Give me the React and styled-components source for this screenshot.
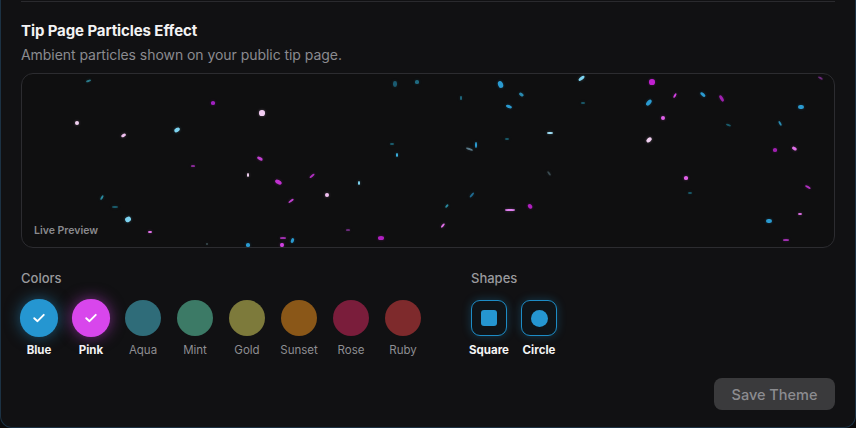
import React from "react";
import styled, { createGlobalStyle } from "styled-components";

const Global = createGlobalStyle`
  html, body { margin: 0; padding: 0; background: #0a0a0b; }
  body { font-family: Inter, "Noto Sans", sans-serif; -webkit-font-smoothing: antialiased; }
  * { box-sizing: border-box; }
`;

const Card = styled.div`
  width: 856px;
  height: 428px;
  background: #111113;
  border: 1px solid #1c3244;
  border-top: none;
  border-radius: 0 0 12px 12px;
  padding: 0 20px 17px;
  display: flex;
  flex-direction: column;
  overflow: hidden;
`;

const Divider = styled.div`
  height: 1px;
  margin-top: 1px;
  background: #2a2a2e;
`;

const Title = styled.h2`
  margin: 19px 0 0;
  font-size: 15px;
  line-height: 20px;
  font-weight: 700;
  color: #f3f3f4;
  letter-spacing: -0.1px;
`;

const Subtitle = styled.p`
  margin: 4px 0 8px;
  font-size: 14px;
  line-height: 20px;
  color: #8b8b90;
  letter-spacing: -0.05px;
`;

const Preview = styled.div`
  position: relative;
  height: 176px;
  border: 1px solid #2c2c30;
  border-radius: 12px;
  background: #0f0f10;
  overflow: hidden;
`;

const Particle = styled.span`
  position: absolute;
  border-radius: 50%;
  box-shadow: 0 0 3px ${(p) => p.$c}55;
`;

const PreviewLabel = styled.span`
  position: absolute;
  left: 12px;
  bottom: 10px;
  font-size: 10.5px;
  font-weight: 600;
  color: #8a8a8e;
`;

const Options = styled.div`
  display: flex;
  gap: 50px;
  margin-top: 21px;
`;

const Group = styled.div`
  display: flex;
  flex-direction: column;
`;

const GroupLabel = styled.div`
  font-size: 13px;
  line-height: 18px;
  font-weight: 500;
  color: #9a9a9e;
  margin-bottom: 13px;
`;

const Row = styled.div`
  display: flex;
  gap: ${(p) => p.$gap}px;
`;

const Item = styled.div`
  width: 36px;
  display: flex;
  flex-direction: column;
  align-items: center;
  gap: 6px;
`;

const Swatch = styled.div`
  width: 36px;
  height: 36px;
  border-radius: 50%;
  background: ${(p) => p.$c};
  display: flex;
  align-items: center;
  justify-content: center;
  transform: ${(p) => (p.$sel ? "scale(1.06)" : "none")};
  box-shadow: ${(p) => (p.$sel ? `0 0 14px ${p.$c}88` : "none")};
`;

const ItemLabel = styled.span`
  font-size: 11.5px;
  line-height: 16px;
  white-space: nowrap;
  font-weight: ${(p) => (p.$sel ? 700 : 400)};
  color: ${(p) => (p.$sel ? "#f4f4f5" : "#8e8e92")};
`;

const ShapeBtn = styled.div`
  width: 36px;
  height: 36px;
  border-radius: 9px;
  border: 1px solid #1d8cc6;
  background: #0f1418;
  box-shadow: 0 0 10px #1d8cc655;
  display: flex;
  align-items: center;
  justify-content: center;
`;

const ShapeMark = styled.div`
  width: ${(p) => (p.$round ? 17 : 16)}px;
  height: ${(p) => (p.$round ? 17 : 16)}px;
  border-radius: ${(p) => (p.$round ? "50%" : "3px")};
  background: #2596d1;
`;

const Footer = styled.div`
  display: flex;
  justify-content: flex-end;
  margin-top: 20px;
`;

const SaveButton = styled.button`
  width: 121px;
  height: 32px;
  border: none;
  border-radius: 8px;
  background: #3a3a3c;
  color: #8c8c90;
  font-family: inherit;
  font-size: 14.5px;
  font-weight: 500;
`;

const colors = [
  { name: "Blue", c: "#2596d1", sel: true },
  { name: "Pink", c: "#d846ec", sel: true },
  { name: "Aqua", c: "#2f6c79" },
  { name: "Mint", c: "#3c7a66" },
  { name: "Gold", c: "#7d7a3b" },
  { name: "Sunset", c: "#8a5718" },
  { name: "Rose", c: "#7a1d3b" },
  { name: "Ruby", c: "#7e2a2c" },
];

// [x, y, w, h, rot, color] in page coordinates
const P = [
  [88, 80, 4, 1, -20, "#2a7a8a"],
  [213, 102, 4, 3, 0, "#a020c0"],
  [262, 112, 5, 5, 0, "#f2cdf2"],
  [77, 122, 4, 4, 0, "#f0d0f0"],
  [177, 129, 5, 3, -30, "#7dd3f0"],
  [123, 134, 4, 2, -30, "#f0c0f0"],
  [395, 83, 4, 5, 0, "#1a5a70"],
  [417, 81, 3, 3, 0, "#1f6a80"],
  [260, 157, 5, 2, 30, "#c040d0"],
  [193, 165, 3, 1, 0, "#8a2a9a"],
  [248, 174, 2, 4, 0, "#f0d0f0"],
  [278, 181, 6, 3, 30, "#c030d0"],
  [312, 175, 5, 1, -40, "#b030c0"],
  [359, 182, 2, 4, 0, "#7dd3f0"],
  [392, 143, 3, 2, 0, "#1a5a6a"],
  [397, 154, 2, 4, 0, "#3ab0e0"],
  [327, 194, 4, 4, 0, "#f0c0f0"],
  [291, 200, 5, 1, -35, "#c040d0"],
  [102, 196, 1, 4, 30, "#2a8aa0"],
  [115, 206, 5, 2, 0, "#1a5a6a"],
  [128, 218, 5, 4, -30, "#7dd3f0"],
  [150, 231, 3, 2, 0, "#e070e8"],
  [381, 237, 5, 3, 0, "#b020c0"],
  [348, 229, 3, 1, 0, "#6a2a7a"],
  [283, 237, 5, 1, 0, "#a030b0"],
  [282, 244, 3, 4, 0, "#d040e0"],
  [292, 239, 2, 4, 20, "#2a9ad0"],
  [248, 244, 3, 3, 0, "#2a9ad0"],
  [207, 243, 2, 1, 0, "#3a4a50"],
  [500, 83, 4, 6, -20, "#2a9ad0"],
  [581, 77, 6, 2, -40, "#7dd3f0"],
  [461, 97, 1, 4, 0, "#1f6a80"],
  [521, 93, 4, 2, 35, "#2a8ab0"],
  [509, 105, 5, 2, 20, "#2a9ad0"],
  [583, 102, 4, 1, 0, "#1a5a6a"],
  [652, 81, 5, 5, 0, "#c020d0"],
  [675, 94, 1, 4, 30, "#d040e0"],
  [649, 101, 3, 6, 40, "#2a9ad0"],
  [703, 93, 5, 2, 40, "#2a9ad0"],
  [721, 97, 2, 6, -30, "#a020b0"],
  [663, 117, 4, 4, 0, "#e060e8"],
  [801, 106, 5, 4, 0, "#2a9ad0"],
  [550, 132, 5, 2, 0, "#a0e0f8"],
  [507, 138, 4, 2, 0, "#1a5a6a"],
  [476, 144, 1, 5, 0, "#2a9ad0"],
  [469, 148, 6, 1, 20, "#5a7a8a"],
  [649, 139, 5, 3, -40, "#f0d0f0"],
  [728, 124, 4, 1, 20, "#1a5a6a"],
  [780, 122, 1, 4, -30, "#2a8ab0"],
  [775, 149, 4, 3, 0, "#a020b0"],
  [794, 147, 4, 2, 30, "#e070e8"],
  [549, 172, 1, 4, -35, "#3a4a50"],
  [686, 177, 4, 3, 0, "#e060e8"],
  [690, 192, 4, 2, 0, "#1a5a6a"],
  [808, 186, 5, 1, 30, "#b030c0"],
  [472, 194, 1, 5, 40, "#1f6a90"],
  [447, 205, 1, 3, 40, "#2a8aa0"],
  [510, 209, 9, 2, 0, "#e080f0"],
  [530, 205, 3, 4, -40, "#b020c0"],
  [443, 224, 1, 4, 40, "#e070e8"],
  [769, 220, 5, 4, 0, "#2a9ad0"],
  [800, 213, 4, 2, 0, "#e070e8"],
  [786, 239, 5, 1, 0, "#a030b0"],
  [820, 77, 4, 1, 30, "#6a2a7a"],
];

const OX = 22;
const OY = 73;

export default function App() {
  return (
    <>
      <Global />
      <Card>
        <Divider />
        <Title>Tip Page Particles Effect</Title>
        <Subtitle>Ambient particles shown on your public tip page.</Subtitle>
        <Preview>
          {P.map(([x, y, w, h, r, c], i) => {
            const W = w + 0.7;
            const H = h + 0.7;
            return (
              <Particle
                key={i}
                $c={c}
                style={{
                  left: x - OX - W / 2,
                  top: y - OY - H / 2,
                  width: W,
                  height: H,
                  background: c,
                  transform: `rotate(${r}deg)`,
                }}
              />
            );
          })}
          <PreviewLabel>Live Preview</PreviewLabel>
        </Preview>
        <Options>
          <Group>
            <GroupLabel>Colors</GroupLabel>
            <Row $gap={16}>
              {colors.map((c) => (
                <Item key={c.name}>
                  <Swatch $c={c.c} $sel={c.sel}>
                    {c.sel && (
                      <svg width="12" height="10" viewBox="0 0 12 10" fill="none">
                        <path d="M1.5 5.2 L4.6 8 L10.5 2" stroke="#fff" strokeWidth="1.8" strokeLinecap="round" strokeLinejoin="round" />
                      </svg>
                    )}
                  </Swatch>
                  <ItemLabel $sel={c.sel}>{c.name}</ItemLabel>
                </Item>
              ))}
            </Row>
          </Group>
          <Group>
            <GroupLabel>Shapes</GroupLabel>
            <Row $gap={14}>
              <Item>
                <ShapeBtn>
                  <ShapeMark />
                </ShapeBtn>
                <ItemLabel $sel>Square</ItemLabel>
              </Item>
              <Item>
                <ShapeBtn>
                  <ShapeMark $round />
                </ShapeBtn>
                <ItemLabel $sel>Circle</ItemLabel>
              </Item>
            </Row>
          </Group>
        </Options>
        <Footer>
          <SaveButton>Save Theme</SaveButton>
        </Footer>
      </Card>
    </>
  );
}
